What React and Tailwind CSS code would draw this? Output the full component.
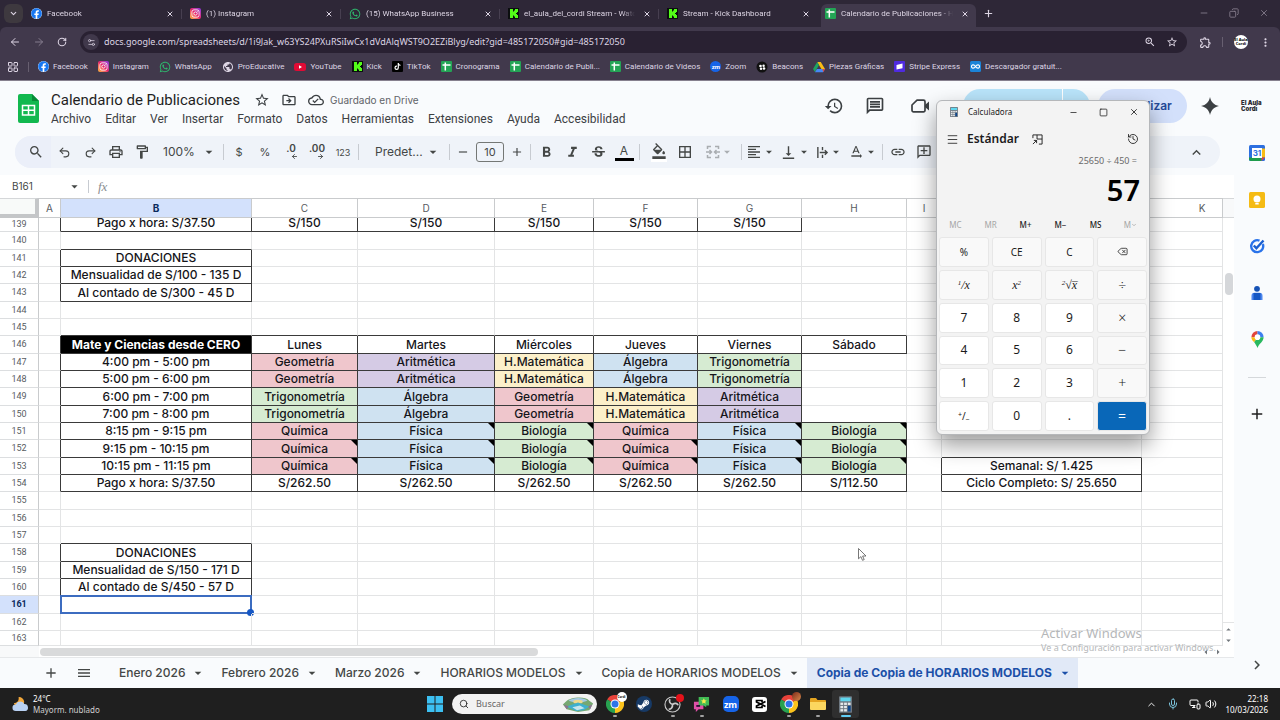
import React from "react";
import {
  MdStarOutline, MdOutlineDriveFileMove, MdOutlineCloudDone, MdSearch, MdOutlinePrint, MdOutlineFormatPaint,
  MdFormatBold, MdFormatItalic, MdStrikethroughS, MdFormatColorFill, MdBorderAll, MdFormatAlignLeft,
  MdVerticalAlignBottom, MdLink, MdOutlineAddComment, MdHistory, MdOutlineComment,
  MdKeyboardArrowUp, MdArrowDropDown, MdAdd, MdRemove, MdChevronRight, MdMenu, MdOutlineExtension,
  MdMoreVert, MdPublic, MdOutlineTextRotationNone, MdArrowDropUp, MdArrowLeft, MdArrowRight, MdZoomIn,
} from "react-icons/md";
import { FaWhatsapp, FaInstagram, FaTiktok, FaSteamSymbol, FaFacebook } from "react-icons/fa";
import {
  Undo2, Redo2, X, Plus, Minus, Square, Copy, ArrowLeft, ArrowRight, RotateCw, ChevronDown, ChevronUp,
  Menu, History, Delete, Mic, Volume2, Search, MonitorSmartphone, Settings2, LayoutGrid,
} from "lucide-react";

/* ---------- brand icons ---------- */

const FacebookIcon = () => (
  <span className="flex size-[11px] shrink-0 rounded-full bg-white"><FaFacebook className="size-[11px] text-[#1877f2]" /></span>
);
const InstagramIcon = () => (
  <span className="flex size-[11px] shrink-0 items-center justify-center rounded-[2px] bg-linear-to-tr from-[#fdb52b] via-[#e8206e] to-[#8a2be8]">
    <FaInstagram className="size-[9px] text-white" />
  </span>
);
const WhatsAppIcon = () => <FaWhatsapp className="size-[12px] shrink-0 text-[#2fb86d]" />;
const KickIcon = () => (
  <svg viewBox="0 0 11 11" className="size-[11px] shrink-0">
    <rect width="11" height="11" fill="#0b0e0f" />
    <path d="M2 1h3v2.500h1v-1h1V1h3v3H9v1H8v1h1v1h1v3H7V8.500H6v-1H5V10H2z" fill="#53fc18" />
  </svg>
);
const SheetIcon = () => (
  <svg viewBox="0 0 11 11" className="size-[11px] shrink-0">
    <rect width="11" height="11" rx="1" fill="#23a455" />
    <path d="M1.500 4h8M4.300 1.500v8" stroke="#fff" strokeWidth="1.500" />
  </svg>
);
const YouTubeIcon = () => (
  <svg viewBox="0 0 12 12" className="size-[12px] shrink-0">
    <rect y="2" width="12" height="8" rx="2.500" fill="#e00b35" />
    <path d="M5 4.300v3.400L8 6z" fill="#fff" />
  </svg>
);
const TikTokIcon = () => (
  <span className="flex size-[11px] shrink-0 items-center justify-center rounded-[1px] bg-black"><FaTiktok className="size-[7px] text-white" /></span>
);
const ZoomIcon = () => (
  <span className="flex size-[11px] shrink-0 items-center justify-center rounded-full bg-[#1664e8] text-[6px] leading-none font-bold text-white">zm</span>
);
const BeaconsIcon = () => (
  <svg viewBox="0 0 12 12" className="size-[12px] shrink-0">
    <circle cx="6" cy="6" r="5.500" fill="#111" />
    <g fill="#fff"><circle cx="4.500" cy="5" r="1.300" /><circle cx="7.600" cy="4.800" r="1.200" /><circle cx="5" cy="7.800" r="1.200" /><circle cx="8" cy="7.500" r="1.300" /></g>
  </svg>
);
const DriveIcon = () => (
  <svg viewBox="0 0 12 12" className="size-[12px] shrink-0">
    <path d="M4.200 1h3.600L12 8H8.400z" fill="#f9bc15" />
    <path d="M4.200 1 6 4.100 2 11 0 8z" fill="#1ea362" />
    <path d="M3.900 8H12l-1.900 3.200H2z" fill="#4688f4" />
    <path d="M9.600 8H12l-1.900 3.200z" fill="#e8453c" />
  </svg>
);
const StripeIcon = () => (
  <svg viewBox="0 0 11 11" className="size-[11px] shrink-0">
    <rect width="11" height="11" rx="1" fill="#4f2be0" /><path d="M2.500 4 8.500 2.600v4.600L2.500 8.500z" fill="#fff" />
  </svg>
);
const DownloaderIcon = () => (
  <svg viewBox="0 0 11 11" className="size-[11px] shrink-0">
    <rect width="11" height="11" rx="1.500" fill="#1b84d8" />
    <path d="M5.500 5.500C4.500 4 3.500 3.800 2.800 3.900c-1.800.4-1.800 2.800 0 3.200.7.100 1.700-.100 2.700-1.600s2-1.700 2.700-1.600c1.800.4 1.800 2.800 0 3.200-.7.100-1.700-.100-2.700-1.600z" fill="none" stroke="#fff" strokeWidth="1.100" />
  </svg>
);
const ChromeIcon = () => (
  <svg viewBox="0 0 20 20" className="size-[18px]">
    <path d="M10 10 1.300 5A10 10 0 0 1 18.700 5z" fill="#e8423a" />
    <path d="M10 10 18.700 5A10 10 0 0 1 10 20z" fill="#fcc31c" />
    <path d="M10 10v10A10 10 0 0 1 1.300 5z" fill="#28a150" />
    <circle cx="10" cy="10" r="5" fill="#fff" /><circle cx="10" cy="10" r="3.900" fill="#2d74e8" />
  </svg>
);
const CalcIcon = ({ className }) => (
  <svg viewBox="0 0 14 18" className={className}>
    <rect width="14" height="18" rx="1" fill="#6d7780" />
    <rect x="1.500" y="1.500" width="11" height="4" fill="#5fd6ee" />
    <g fill="#e6eaec">
      <rect x="1.500" y="7" width="3" height="2.500" /><rect x="5.500" y="7" width="3" height="2.500" /><rect x="9.500" y="7" width="3" height="2.500" />
      <rect x="1.500" y="10.500" width="3" height="2.500" /><rect x="5.500" y="10.500" width="3" height="2.500" />
      <rect x="1.500" y="14" width="3" height="2.500" /><rect x="5.500" y="14" width="3" height="2.500" />
    </g>
    <rect x="9.500" y="10.500" width="3" height="6" fill="#0d478f" />
  </svg>
);

/* ---------- browser ---------- */

const TABS = [
  ["Facebook", FacebookIcon], ["(1) Instagram", InstagramIcon], ["(15) WhatsApp Business", WhatsAppIcon],
  ["el_aula_del_cordi Stream - Watch", KickIcon], ["Stream - Kick Dashboard", KickIcon],
  ["Calendario de Publicaciones - Hojas", SheetIcon],
];

const BOOKMARKS = [
  ["Facebook", FacebookIcon], ["Instagram", InstagramIcon], ["WhatsApp", WhatsAppIcon],
  ["ProEducative", () => <MdPublic className="size-[12px] shrink-0" />], ["YouTube", YouTubeIcon], ["Kick", KickIcon],
  ["TikTok", TikTokIcon], ["Cronograma", SheetIcon], ["Calendario de Publi...", SheetIcon],
  ["Calendario de Videos", SheetIcon], ["Zoom", ZoomIcon], ["Beacons", BeaconsIcon],
  ["Piezas Gráficas", DriveIcon], ["Stripe Express", StripeIcon], ["Descargador gratuit...", DownloaderIcon],
];

function Browser() {
  return (
    <div className="bg-[#2e2737] font-['Noto_Sans',sans-serif] text-[#ddd5e4]">
      <div className="flex h-[27px] items-end">
        <button aria-label="Buscar pestañas" className="mr-[3px] mb-[4px] ml-[4px] flex size-[19px] items-center justify-center rounded-[6px] bg-[#3e393f]">
          <ChevronDown size={9} strokeWidth={3} />
        </button>
        {TABS.map(([title, Icon], i) => {
          const active = i === TABS.length - 1;
          return (
            <div key={i} className={active ? "flex h-[23px] w-[155px] items-center rounded-t-[6px] bg-[#41394c] pr-[4px] pb-[4px] pl-[4px]" : "flex h-[23px] w-[159px] items-center pr-[3px] pb-[4px] pl-[5px]"}>
              <Icon />
              <span className="ml-[5px] flex-1 overflow-hidden font-[Roboto,sans-serif] text-[8px] leading-[12px] whitespace-nowrap [mask-image:linear-gradient(to_right,black_88%,transparent)]">
                {title}
              </span>
              <button aria-label={"Cerrar " + title} className="mr-[3px] ml-[8px]"><X size={8} strokeWidth={3} /></button>
              {!active && <span className={i < 4 ? "ml-[4px] h-[10px] w-px bg-[#473f50]" : "ml-[4px] h-[10px] w-px"} />}
            </div>
          );
        })}
        <button aria-label="Nueva pestaña" className="mb-[8px] ml-[7px]"><Plus size={11} strokeWidth={2.500} /></button>
        <div className="mr-[11px] mb-[9px] ml-auto flex gap-[20px] text-[#8a8292]">
          <button aria-label="Minimizar"><Minus size={10} /></button>
          <button aria-label="Restaurar"><Copy size={10} className="-scale-x-100" /></button>
          <button aria-label="Cerrar ventana"><X size={10} /></button>
        </div>
      </div>

      <div className="rounded-t-[6px] border-b border-[#86808e] bg-[#41394c]">
        <div className="flex h-[30px] items-center">
          <button aria-label="Atrás" className="ml-[9px]"><ArrowLeft size={12} /></button>
          <button aria-label="Adelante" className="ml-[12px] text-[#857d8e]"><ArrowRight size={12} /></button>
          <button aria-label="Recargar" className="ml-[12px]"><RotateCw size={10} strokeWidth={2.500} /></button>
          <div className="ml-[13px] flex h-[22px] flex-1 items-center rounded-full bg-[#292132] pr-[9px] pl-[3px]">
            <span className="flex size-[16px] items-center justify-center rounded-full bg-[#40384b]"><Settings2 size={9} /></span>
            <input aria-label="Dirección" className="ml-[5px] min-w-0 flex-1 bg-transparent text-[9px] outline-none"
              defaultValue="docs.google.com/spreadsheets/d/1i9Jak_w63YS24PXuRSiIwCx1dVdAlqWST9O2EZiBlyg/edit?gid=485172050#gid=485172050" />
            <button aria-label="Zoom"><MdZoomIn size={12} /></button>
            <button aria-label="Favorito" className="ml-[10px]"><MdStarOutline size={12} /></button>
          </div>
          <button aria-label="Extensiones" className="ml-[12px]"><MdOutlineExtension size={13} /></button>
          <span className="ml-[10px] h-[10px] w-px bg-[#675f70]" />
          <button aria-label="Perfil" className="ml-[11px] flex size-[14px] items-center justify-center rounded-full bg-white text-[4px] leading-[4px] font-bold text-black">El Aula Cordi</button>
          <button aria-label="Menú" className="mr-[8px] ml-[11px]"><MdMoreVert size={13} /></button>
        </div>
        <nav className="flex h-[23px] items-center pl-[7px] pb-[4px]">
          <LayoutGrid size={12} />
          <span className="mx-[9px] h-[10px] w-px bg-[#675f70]" />
          <div className="flex items-center gap-[10px] font-[Roboto,sans-serif]">
            {BOOKMARKS.map(([label, Icon], i) => (
              <a key={i} href="#" className="flex items-center gap-[4px] text-[8px] leading-[12px] whitespace-nowrap"><Icon />{label}</a>
            ))}
          </div>
        </nav>
      </div>
    </div>
  );
}

/* ---------- Sheets header ---------- */

const MENUS = ["Archivo", "Editar", "Ver", "Insertar", "Formato", "Datos", "Herramientas", "Extensiones", "Ayuda", "Accesibilidad"];

function SheetsHeader() {
  return (
    <header className="flex h-[55px] items-start pt-[8px] pl-[18px] text-[#3c4043]">
      <svg viewBox="0 0 21 29" className="mt-[5px] h-[29px] w-[21px]">
        <path d="M2 0h12l7 7v20a2 2 0 0 1-2 2H2a2 2 0 0 1-2-2V2a2 2 0 0 1 2-2z" fill="#12b84f" />
        <path d="M14 0l7 7h-7z" fill="#078a38" />
        <path d="M4.500 11.500h12v9.500h-12zM4.500 16.200h12M10.500 11.500V21" fill="none" stroke="#fff" strokeWidth="1.500" />
      </svg>
      <div className="ml-[12px]">
        <div className="flex h-[22px] items-center">
          <h1 className="font-[Roboto,sans-serif] text-[15px] leading-[20px] text-[#1f1f1f]">Calendario de Publicaciones</h1>
          <button aria-label="Destacar" className="ml-[14px]"><MdStarOutline size={16} /></button>
          <button aria-label="Mover" className="ml-[11px]"><MdOutlineDriveFileMove size={16} /></button>
          <MdOutlineCloudDone size={16} className="ml-[11px]" />
          <span className="ml-[6px] text-[10px] text-[#5f6368]">Guardado en Drive</span>
        </div>
        <nav className="flex h-[16px] items-center gap-[14px] font-[Roboto,sans-serif] text-[12px] leading-[16px]">
          {MENUS.map((m) => <button key={m}>{m}</button>)}
        </nav>
      </div>
      <div className="ml-auto flex h-[34px] items-center">
        <button aria-label="Historial"><MdHistory size={20} /></button>
        <button aria-label="Comentarios" className="ml-[21px]"><MdOutlineComment size={20} className="-scale-x-100" /></button>
        <button aria-label="Videollamada" className="ml-[24px]">
          <svg viewBox="0 0 22 22" className="size-[22px]"><path d="M8 5.200h6.500a1.500 1.500 0 0 1 1.500 1.500v8.600a1.500 1.500 0 0 1-1.500 1.500h-10A1.500 1.500 0 0 1 3 15.300V10z" fill="none" stroke="currentColor" strokeWidth="1.700" strokeLinejoin="round" /><path d="M16 10l4-3.500v9L16 12z" fill="currentColor" /></svg>
        </button>
        <button aria-label="Compartir" className="ml-[32px] flex h-[34px] w-[127px] justify-end rounded-full bg-[#b9e4fa]"><span className="mr-[27px] h-full w-px bg-white" /></button>
        <button className="ml-[8px] h-[34px] w-[89px] rounded-full bg-[#d3e0fb] text-[12px] font-semibold text-[#244a98]">Actualizar</button>
        <svg viewBox="0 0 18 18" className="ml-[14px] size-[18px]"><path d="M9 0c1 5 4 8 9 9-5 1-8 4-9 9-1-5-4-8-9-9 5-1 8-4 9-9z" fill="#3c4043" /></svg>
        <span className="mr-[17px] ml-[22px] w-[22px] text-[6px] leading-[6px] font-black whitespace-nowrap text-[#2b2b33]">El Aula<br />Cordi</span>
      </div>
    </header>
  );
}

const Sep = () => <span className="mx-[2px] h-[16px] w-px shrink-0 bg-[#c7cbd1]" />;
const Tool = ({ label, children }) => (
  <button aria-label={label} className="flex h-[26px] w-[26px] shrink-0 items-center justify-center">{children}</button>
);
const DropTool = ({ label, children }) => (
  <button aria-label={label} className="flex h-[26px] w-[34px] shrink-0 items-center justify-center">{children}<MdArrowDropDown size={14} /></button>
);

function Toolbar() {
  return (
    <div className="mr-[14px] ml-[15px] flex h-[32px] items-center rounded-full bg-[#eff3f9] text-[#444746]">
      <button aria-label="Buscar" className="flex h-[32px] w-[36px] items-center justify-center rounded-l-full bg-[#ebeff9] pl-[5px]"><MdSearch size={16} /></button>
      <div className="flex items-center">
        <Tool label="Deshacer"><Undo2 size={13} /></Tool>
        <Tool label="Rehacer"><Redo2 size={13} /></Tool>
        <Tool label="Imprimir"><MdOutlinePrint size={16} /></Tool>
        <Tool label="Copiar formato"><MdOutlineFormatPaint size={16} /></Tool>
        <button className="ml-[8px] flex w-[58px] items-center justify-between text-[12px]">100%<MdArrowDropDown size={16} className="mr-[4px]" /></button>
        <Sep />
        <Tool label="Moneda"><span className="text-[11px]">$</span></Tool>
        <Tool label="Porcentaje"><span className="text-[11px]">%</span></Tool>
        <Tool label="Reducir decimales"><span className="flex flex-col text-[10px] leading-[9px] font-semibold">.0<ArrowLeft size={7} strokeWidth={3} className="ml-[7px]" /></span></Tool>
        <Tool label="Aumentar decimales"><span className="flex flex-col text-[10px] leading-[9px] font-semibold">.00<ArrowRight size={7} strokeWidth={3} className="ml-[8px]" /></span></Tool>
        <Tool label="Más formatos"><span className="text-[9px] leading-none">123</span></Tool>
        <Sep />
        <button className="ml-[14px] flex w-[72px] items-center justify-between text-[12px]">Predet...<MdArrowDropDown size={16} className="mr-[6px]" /></button>
        <Sep />
        <button aria-label="Reducir tamaño" className="ml-[4px]"><MdRemove size={14} /></button>
        <input aria-label="Tamaño de fuente" defaultValue="10" className="mx-[6px] h-[20px] w-[28px] rounded-[3px] border border-[#747775] text-center text-[11px]" />
        <button aria-label="Aumentar tamaño" className="mr-[4px]"><MdAdd size={14} /></button>
        <Sep />
        <Tool label="Negrita"><MdFormatBold size={17} /></Tool>
        <Tool label="Cursiva"><MdFormatItalic size={17} /></Tool>
        <Tool label="Tachado"><MdStrikethroughS size={17} /></Tool>
        <Tool label="Color de texto"><span className="flex w-[19px] flex-col items-center border-b-3 border-black text-[12px] leading-[14px]">A</span></Tool>
        <Sep />
        <div className="flex pl-[4px]">
          <Tool label="Color de relleno"><span className="border-b-3 border-white"><MdFormatColorFill size={16} /></span></Tool>
          <Tool label="Bordes"><MdBorderAll size={16} /></Tool>
        </div>
        <span className="pr-[2px] pl-[5px] text-[#a9adb1]">
          <DropTool label="Combinar celdas">
            <svg viewBox="0 0 14 14" className="size-[14px]" fill="none" stroke="currentColor" strokeWidth="1.500">
              <path d="M5 1.500H1.500V4M9 1.500h3.500V4M5 12.500H1.500V10M9 12.500h3.500V10M0 7h5M3.500 5 5.500 7l-2 2M14 7H9M10.500 5l-2 2 2 2" />
            </svg>
          </DropTool>
        </span>
        <Sep />
        <DropTool label="Alineación horizontal"><MdFormatAlignLeft size={16} /></DropTool>
        <DropTool label="Alineación vertical"><MdVerticalAlignBottom size={17} /></DropTool>
        <DropTool label="Ajuste de texto">
          <svg viewBox="0 0 14 14" className="size-[13px]" fill="none" stroke="currentColor" strokeWidth="1.500"><path d="M2 1v12M7 1v3.500M7 9.500V13M4 7h8M9.500 4.500 12 7 9.500 9.500" /></svg>
        </DropTool>
        <DropTool label="Rotación de texto"><MdOutlineTextRotationNone size={16} /></DropTool>
        <Sep />
        <Tool label="Insertar enlace"><MdLink size={16} /></Tool>
        <Tool label="Insertar comentario"><MdOutlineAddComment size={16} className="-scale-x-100" /></Tool>
      </div>
      <button aria-label="Ocultar menús" className="mr-[15px] ml-auto"><MdKeyboardArrowUp size={17} /></button>
    </div>
  );
}

/* ---------- grid ---------- */

const COLS = ["A", "B", "C", "D", "E", "F", "G", "H", "I", "J", "K"];
const FILL = {
  "Geometría": "bg-[#efc6cc]", "Química": "bg-[#efc6cc]", "Aritmética": "bg-[#d5cbe5]", "Álgebra": "bg-[#cfe2f1]",
  "Física": "bg-[#cfe2f1]", "H.Matemática": "bg-[#fcf0ca]", "Trigonometría": "bg-[#d6ebd2]", "Biología": "bg-[#d6ebd2]",
};
const week = (b, ...rest) => ({ B: b, C: rest[0], D: rest[1], E: rest[2], F: rest[3], G: rest[4], H: rest[5] });
const CELLS = {
  139: week("Pago x hora: S/37.50", "S/150", "S/150", "S/150", "S/150", "S/150"),
  141: { B: "DONACIONES" },
  142: { B: "Mensualidad de S/100 - 135 D" },
  143: { B: "Al contado de S/300 - 45 D" },
  146: week("Mate y Ciencias desde CERO", "Lunes", "Martes", "Miércoles", "Jueves", "Viernes", "Sábado"),
  147: week("4:00 pm - 5:00 pm", "Geometría", "Aritmética", "H.Matemática", "Álgebra", "Trigonometría"),
  148: week("5:00 pm - 6:00 pm", "Geometría", "Aritmética", "H.Matemática", "Álgebra", "Trigonometría"),
  149: week("6:00 pm - 7:00 pm", "Trigonometría", "Álgebra", "Geometría", "H.Matemática", "Aritmética"),
  150: week("7:00 pm - 8:00 pm", "Trigonometría", "Álgebra", "Geometría", "H.Matemática", "Aritmética"),
  151: week("8:15 pm - 9:15 pm", "Química", "Física", "Biología", "Química", "Física", "Biología"),
  152: week("9:15 pm - 10:15 pm", "Química", "Física", "Biología", "Química", "Física", "Biología"),
  153: { ...week("10:15 pm - 11:15 pm", "Química", "Física", "Biología", "Química", "Física", "Biología"), J: "Semanal: S/ 1.425" },
  154: { ...week("Pago x hora: S/37.50", "S/262.50", "S/262.50", "S/262.50", "S/262.50", "S/262.50", "S/112.50"), J: "Ciclo Completo: S/ 25.650" },
  158: { B: "DONACIONES" },
  159: { B: "Mensualidad de S/150 - 171 D" },
  160: { B: "Al contado de S/450 - 57 D" },
};
const NOTES = { 151: "DEGH", 152: "CDEFGH", 153: "CDEFGH" };
const ROWS = Array.from({ length: 25 }, (_, i) => 139 + i);
const at = (r, c) => (CELLS[r] && CELLS[r][c]) || "";

function rowHeight(r) {
  if (r === 139) return "h-[14px]";
  if (r === 163) return "h-[15px]";
  return (r - 140) % 3 === 0 ? "h-[18px]" : "h-[17px]";
}

function Cell({ r, c }) {
  const next = COLS[COLS.indexOf(c) + 1];
  const text = at(r, c);
  const right = text || at(r, next) ? "border-r-[#3a3a3a]" : "border-r-[#e3e4e5]";
  const bottom = text || at(r + 1, c) ? "border-b-[#3a3a3a]" : "border-b-[#e3e4e5]";
  const title = r === 146 && c === "B";
  const look = title ? "bg-black font-bold text-white" : `font-medium text-[#15151a] ${FILL[text] || ""}`;
  return (
    <td className={`relative border-r border-b p-0 text-center align-middle text-[12px] leading-[16px] whitespace-nowrap ${right} ${bottom} ${look}`}>
      {r === 139 ? <div className="flex h-[13px] items-end justify-center overflow-hidden">{text}</div> : text}
      {(NOTES[r] || "").includes(c) && (
        <svg viewBox="0 0 6 6" className="absolute top-0 right-0 size-[6px]"><path d="M0 0h6v6z" /></svg>
      )}
      {r === 161 && c === "B" && (
        <span className="absolute -top-px -right-px -bottom-px -left-px border-2 border-[#3c6cc0]">
          <span className="absolute -right-[4px] -bottom-[4px] size-[7px] rounded-full bg-[#1557c4]" />
        </span>
      )}
    </td>
  );
}

function Grid() {
  return (
    <div className="flex bg-white">
      <table className="w-full min-w-0 flex-1 table-fixed border-separate border-spacing-0 font-[Inter,sans-serif]">
        <colgroup>
          <col className="w-[39px]" /><col className="w-[22px]" /><col className="w-[191px]" /><col className="w-[106px]" />
          <col className="w-[137px]" /><col className="w-[99px]" /><col className="w-[104px]" /><col className="w-[104px]" />
          <col className="w-[105px]" /><col className="w-[35px]" /><col className="w-[200px]" /><col />
        </colgroup>
        <thead>
          <tr>
            <th aria-label="Seleccionar todo" className="h-[20px] border-t border-r-4 border-b-4 border-t-[#d5d7d9] border-r-[#c4c6c8] border-b-[#c4c6c8] bg-[#f8faf9] p-0" />
            {COLS.map((c) => (
              <th key={c} className={`h-[20px] border-t border-r border-b border-[#c9cbcd] py-0 pr-0 text-[10px] leading-[12px] ${c === "K" ? "pl-[40px]" : "pl-0"} ${c === "B" ? "bg-[#d3e1fc] font-bold text-[#0b2a5c]" : "font-normal text-[#575b5f]"}`}>{c}</th>
            ))}
          </tr>
        </thead>
        <tbody>
          {ROWS.map((r) => (
            <tr key={r} className={rowHeight(r)}>
              <th className={`border-r border-b border-r-[#c9cbcd] border-b-[#dcdee0] p-0 text-center font-[Roboto,sans-serif] text-[9px] leading-[11px] ${r === 161 ? "bg-[#d3e1fc] font-bold text-[#0b2a5c]" : "font-normal text-[#575b5f]"}`}>{r}</th>
              {COLS.map((c) => <Cell key={c} r={r} c={c} />)}
            </tr>
          ))}
        </tbody>
      </table>
      <div className="flex w-[11px] shrink-0 flex-col items-center text-[#70757a]">
        <div className="h-[20px] w-full border-t border-b border-[#d5d7d9] bg-[#f8f9fa]" />
        <div className="mt-[55px] h-[22px] w-[8px] rounded-full bg-[#d5d7da]" />
        <div className="mt-auto flex flex-col border-t border-[#e3e4e5] pt-[1px]"><MdArrowDropUp size={11} /><MdArrowDropDown size={11} /></div>
      </div>
    </div>
  );
}

const SHEETS = ["Enero 2026", "Febrero 2026", "Marzo 2026", "HORARIOS MODELOS", "Copia de HORARIOS MODELOS", "Copia de Copia de HORARIOS MODELOS"];

function SheetTabs() {
  return (
    <>
      <div className="flex h-[11px] items-center bg-white">
        <div className="h-full w-[39px] bg-[#f8f9fa]" />
        <div className="mx-px h-[8px] w-[498px] rounded-full bg-[#d9dadb]" />
        <div className="mr-[10px] ml-auto flex text-[#70757a]"><MdArrowLeft size={12} /><MdArrowRight size={12} /></div>
      </div>
      <div className="flex h-[31px] items-center border-t border-[#e6e8ea] text-[#444746]">
        <button aria-label="Agregar hoja" className="ml-[43px]"><MdAdd size={16} /></button>
        <button aria-label="Todas las hojas" className="mr-[17px] ml-[17px]"><MdMenu size={16} /></button>
        {SHEETS.map((s, i) => (
          <button key={s} className={`flex h-full items-center gap-[5px] pr-[5px] pl-[10px] text-[12px] whitespace-nowrap ${i === 5 ? "bg-[#e1e9f7] font-bold text-[#1c50a8]" : "font-medium"}`}>
            {s}<MdArrowDropDown size={16} />
          </button>
        ))}
      </div>
    </>
  );
}

function SidePanel() {
  return (
    <aside className="flex w-[46px] shrink-0 flex-col items-center pt-[9px]">
      <a href="#" aria-label="Calendar"><svg viewBox="0 0 16 16" className="size-[16px]">
        <rect width="16" height="16" rx="1.500" fill="#2d6fe0" /><path d="M12.500 3.500H16v9h-3.500z" fill="#f9bc15" /><path d="M3.500 12.500h9V16H2a2 2 0 0 1-2-2v-1.500z" fill="#1f9c4b" /><path d="M12.500 12.500H16L12.500 16z" fill="#e2453c" />
        <rect x="3" y="3" width="10" height="10" fill="#fff" /><text x="8" y="11" textAnchor="middle" fontSize="8" fontWeight="700" fill="#2d6fe0" fontFamily="Inter, sans-serif">31</text>
      </svg></a>
      <a href="#" aria-label="Keep" className="mt-[31px]"><svg viewBox="0 0 16 16" className="size-[16px]">
        <rect width="16" height="16" rx="1.500" fill="#f5bb14" /><circle cx="8" cy="7" r="3.500" fill="#fff" /><rect x="6.300" y="11" width="3.400" height="1.500" fill="#fff" />
      </svg></a>
      <a href="#" aria-label="Tasks" className="mt-[30px]"><svg viewBox="0 0 16 16" className="size-[16px]" fill="none">
        <path d="M13.800 6A6 6 0 1 1 10.500 2.600" stroke="#2a73ea" strokeWidth="2.400" /><path d="m4.800 7.500 2.600 2.700L14.500 2.500" stroke="#1b5fd0" strokeWidth="2.400" />
      </svg></a>
      <a href="#" aria-label="Contactos" className="mt-[31px]"><svg viewBox="0 0 16 16" className="size-[16px]">
        <circle cx="8" cy="3.800" r="2.900" fill="#1652b5" /><path d="M2.500 15v-4.200A3 3 0 0 1 5.500 7.800h5a3 3 0 0 1 3 3V15z" fill="#4d86ee" /><path d="M4.500 8h7v7h-7z" fill="#1557c4" />
      </svg></a>
      <a href="#" aria-label="Maps" className="mt-[30px]"><svg viewBox="0 0 16 18" className="h-[17px] w-[15px]">
        <path d="M8 0a6.500 6.500 0 0 0-6.500 6.500L8 6.500z" fill="#e2453c" /><path d="M8 0a6.500 6.500 0 0 1 6.500 6.500H8z" fill="#3d7ff0" />
        <path d="M1.500 6.500C1.500 9 3 10.500 4.500 12L8 6.500z" fill="#f9bc15" /><path d="M14.500 6.500c0 5-5 6.500-6.500 11.500-1-2.500-2.200-4-3.500-6L8 6.500z" fill="#29b85f" /><circle cx="8" cy="6.500" r="3" fill="#fff" />
      </svg></a>
      <span className="mt-[29px] h-px w-[18px] bg-[#d5d8db]" />
      <button aria-label="Complementos" className="mt-[27px] text-[#1f1f1f]"><MdAdd size={18} /></button>
      <button aria-label="Ocultar panel" className="mt-auto mb-[14px] text-[#444746]"><MdChevronRight size={18} /></button>
    </aside>
  );
}

/* ---------- calculator ---------- */

const V = ({ children }) => <i className="font-['Liberation_Serif',serif] text-[12px] font-normal">{children}</i>;
const KEYS = [
  ["%", "%"], ["CE", "CE"], ["C", "C"], ["retroceso", <Delete size={11} strokeWidth={1.700} />],
  ["recíproco", <V><sup className="text-[7px]">1</sup>/x</V>], ["cuadrado", <V>x<sup className="text-[7px]">2</sup></V>],
  ["raíz", <V><sup className="text-[7px]">2</sup>√x̅</V>], ["dividir", "÷"],
  ["7", "7"], ["8", "8"], ["9", "9"], ["multiplicar", "×"],
  ["4", "4"], ["5", "5"], ["6", "6"], ["restar", "−"],
  ["1", "1"], ["2", "2"], ["3", "3"], ["sumar", "+"],
  ["signo", <span className="text-[10px]"><sup className="text-[7px]">+</sup>/<sub className="text-[7px]">−</sub></span>], ["0", "0"], ["punto", "."], ["igual", "="],
];

function Calculator() {
  return (
    <section aria-label="Calculadora" className="absolute top-[100px] right-[130px] w-[214px] rounded-[6px] border border-[#b5b7ba] bg-[#f3f3f3] pb-[3px] font-['Noto_Sans',sans-serif] text-[#1b1b1b] shadow-[0_10px_22px_rgba(0,0,0,0.4)]">
      <div className="flex h-[22px] items-center pl-[13px]">
        <CalcIcon className="h-[10px] w-[8px]" />
        <span className="ml-[10px] text-[8px]">Calculadora</span>
        <div className="mr-[10px] ml-auto flex gap-[21px]">
          <button aria-label="Minimizar calculadora"><Minus size={9} /></button>
          <button aria-label="Maximizar calculadora"><Square size={9} /></button>
          <button aria-label="Cerrar calculadora"><X size={10} /></button>
        </div>
      </div>
      <div className="flex h-[32px] items-center pr-[10px] pl-[9px]">
        <button aria-label="Navegación"><Menu size={13} strokeWidth={1.500} /></button>
        <h2 className="ml-[8px] text-[12px] font-semibold">Estándar</h2>
        <button aria-label="Mantener visible" className="ml-[13px]">
          <svg viewBox="0 0 12 12" className="size-[11px]" fill="none" stroke="currentColor" strokeWidth="1"><path d="M1 4.500V1h10v10H7.500M5.500 1v4.500H11M1 11l4-4M2 7h3v3" /></svg>
        </button>
        <button aria-label="Historial de cálculos" className="ml-auto"><History size={12} strokeWidth={1.700} /></button>
      </div>
      <p className="pr-[12px] text-right text-[9px] leading-[12px] text-[#6a6a6a]">25650 ÷ 450 =</p>
      <p className="pr-[9px] text-right text-[29px] leading-[46px] font-semibold text-black">57</p>
      <div className="grid h-[24px] grid-cols-6 items-center px-[1px] text-center text-[8px]">
        {["MC", "MR", "M+", "M−", "MS"].map((k, i) => <button key={k} className={i < 2 ? "text-[#a5a5a5]" : "font-medium"}>{k}</button>)}
        <button aria-label="Memoria" className="flex items-center justify-center text-[#a5a5a5]">M<ChevronDown size={6} strokeWidth={3} /></button>
      </div>
      <div className="grid h-[194px] grid-cols-4 grid-rows-6 gap-[3px] px-[2px]">
        {KEYS.map(([label, face], i) => {
          const digit = i >= 8 && i % 4 !== 3;
          const look = label === "igual" ? "bg-[#0967b8] text-white text-[14px]" : digit ? "bg-white text-[12px]" : i < 4 ? "bg-[#f9f9f9] text-[10px]" : "bg-[#f9f9f9] text-[14px] font-light";
          return <button key={i} aria-label={label} className={`flex items-center justify-center rounded-[3px] border border-[#e7e7e7] leading-none ${look}`}>{face}</button>;
        })}
      </div>
    </section>
  );
}

/* ---------- taskbar ---------- */

const APPS = [
  ["Chrome", <><ChromeIcon /><span className="absolute -top-[3px] -right-[3px] size-[10px] rounded-full bg-white text-center text-[3px] leading-[10px] font-bold text-black">Cordi</span></>, true],
  ["Steam", <span className="flex size-[16px] items-center justify-center rounded-full bg-[#173a66]"><FaSteamSymbol size={13} className="text-white" /></span>, false],
  ["OBS", <><svg viewBox="0 0 18 18" className="size-[17px]"><circle cx="9" cy="9" r="8" fill="#222" stroke="#c9c9c9" strokeWidth="1.200" /><path d="M9 9C6 8 5 5.500 6.500 3.500M9 9c2.500-2 5-1.500 6 .8M9 9c.3 3-1.500 5-4 5" fill="none" stroke="#c9c9c9" strokeWidth="1.800" /></svg><span className="absolute -top-[2px] -right-[3px] size-[8px] rounded-full bg-[#e5121a]" /></>, true],
  ["Chat", <svg viewBox="0 0 18 18" className="size-[17px]"><path d="M1 6h10v8H6l-3 3v-3H1z" fill="#e050a8" /><path d="M6 1h11v9h-3v2l-3-2H6z" fill="#41bb55" /><path d="m11.500 2.500 1 2 2 .2-1.500 1.400.4 2-1.900-1-1.900 1 .4-2L8.500 4.700l2-.2z" fill="#f7e94c" /><path d="M3.500 9.500h4v2h-4z" fill="#2b1033" /></svg>, true],
  ["Zoom", <span className="flex size-[16px] items-center justify-center rounded-[5px] bg-[#1664e8] text-[9px] leading-none font-bold text-white">zm</span>, false],
  ["CapCut", <span className="flex size-[15px] items-center justify-center rounded-[3px] bg-white"><svg viewBox="0 0 12 10" className="w-[12px]" fill="none" stroke="#000" strokeWidth="1.700"><path d="M8 3V1.500H2.500V3L11.500 7.500M8 7v1.500H2.500V7L11.500 2.500" /></svg></span>, false],
  ["Chrome 2", <><ChromeIcon /><span className="absolute -top-[3px] -right-[3px] size-[9px] rounded-full bg-linear-to-br from-[#7d2a1a] to-[#d98a4c]" /></>, true],
  ["Archivos", <svg viewBox="0 0 16 14" className="h-[14px] w-[16px]"><path d="M0 2a1 1 0 0 1 1-1h5l1.500 2H15a1 1 0 0 1 1 1v8H0z" fill="#e5a521" /><path d="M0 5h16v7a1 1 0 0 1-1 1H1a1 1 0 0 1-1-1z" fill="#fbd75f" /></svg>, true],
];

function Taskbar() {
  return (
    <footer className="grid h-[32px] grid-cols-[1fr_auto_1fr] items-center bg-[#1f1f1f] font-['Noto_Sans',sans-serif] text-white">
      <div className="flex items-center pl-[12px] text-[8px] leading-[11px]">
        <svg viewBox="0 0 18 18" className="mr-[4px] size-[17px]">
          <path d="M7 1c.5 4-1 6-5 6.500A5.500 5.500 0 1 0 7 1z" fill="#f3a83b" />
          <path d="M4 16a3.500 3.500 0 0 1 0-7 5 5 0 0 1 9-.5A3.800 3.800 0 0 1 14 16z" fill="#b9d1f3" />
        </svg>
        <div><div>24°C</div><div className="text-[#cfcfcf]">Mayorm. nublado</div></div>
      </div>
      <div className="flex items-center">
        <button aria-label="Inicio" className="mr-[9px] ml-[6px]">
          <svg viewBox="0 0 16 16" className="size-[16px]" fill="#3cc0f2"><path d="M0 0h7.500v7.500H0zM8.500 0H16v7.500H8.500zM0 8.500h7.500V16H0zM8.500 8.500H16V16H8.500z" /></svg>
        </button>
        <label className="mr-[3px] flex h-[20px] w-[145px] items-center rounded-full bg-[#f2f2f2] pr-[3px] pl-[7px] text-[#222]">
          <Search size={10} />
          <input aria-label="Buscar" placeholder="Buscar" className="ml-[7px] w-[60px] min-w-0 flex-1 bg-transparent text-[9px] outline-none placeholder:text-[#666]" />
          <svg viewBox="0 0 32 18" className="h-[17px] w-[32px]">
            <path d="M3 6C8 1 24 0 28 5l4 3-4 7-12 2-12-3-4-5z" fill="#76a872" /><path d="M6 5c5-4 16-4 20 0l-10 3z" fill="#a4c9e6" /><ellipse cx="16" cy="6" rx="5" ry="2" fill="#f0d98c" /><path d="m4 11 12-4 12 4-6 4-8 1z" fill="#3fb0cf" /><path d="m10 12 8-2 5 3-8 2z" fill="#c8e6ee" /><path d="m1 9 5 2-2 3zM27 11l4-2-2 5z" fill="#8d6f94" />
          </svg>
        </label>
        {APPS.map(([name, icon, running]) => (
          <button key={name} aria-label={name} className="relative flex h-[32px] w-[29px] items-center justify-center">
            <span className="relative">{icon}</span>
            {running && <span className="absolute bottom-[3px] h-[2px] w-[4px] rounded-full bg-[#a2a2a2]" />}
          </button>
        ))}
        <button aria-label="Abrir calculadora" className="relative flex h-[28px] w-[27px] items-center justify-center rounded-[3px] bg-[#2f2f2f]">
          <CalcIcon className="h-[17px] w-[13px]" />
          <span className="absolute bottom-px h-[2px] w-[10px] rounded-full bg-[#60cdf5]" />
        </button>
      </div>
      <div className="flex items-center justify-end pr-[12px]">
        <ChevronUp size={11} />
        <Mic size={12} className="ml-[10px] text-[#7cc3dc]" />
        <MonitorSmartphone size={12} className="ml-[10px]" />
        <Volume2 size={12} className="ml-[4px]" />
        <div className="ml-[8px] text-right text-[8px] leading-[11px]"><div>22:18</div><div>10/03/2026</div></div>
      </div>
    </footer>
  );
}

export default function App() {
  return (
    <div className="relative flex min-h-screen flex-col bg-[#f9fbfd] font-[Inter,sans-serif]">
      <Browser />
      <SheetsHeader />
      <div className="flex flex-1">
        <main className="flex min-w-0 flex-1 flex-col">
          <Toolbar />
          <div className="mt-[7px] flex h-[23px] items-center bg-white text-[#444746]">
            <input aria-label="Cuadro de nombres" defaultValue="B161" className="ml-[12px] w-[55px] text-[10px] outline-none" />
            <MdArrowDropDown size={15} />
            <span className="mx-[6px] h-[13px] w-px bg-[#c7cbd1]" />
            <label htmlFor="formula" className="ml-[3px] font-['Liberation_Serif',serif] text-[13px] text-[#8a8d91] italic">fx</label>
            <input id="formula" className="ml-[8px] min-w-0 flex-1 text-[11px] outline-none" />
          </div>
          <Grid />
          <SheetTabs />
        </main>
        <SidePanel />
      </div>
      <Taskbar />
      <Calculator />
      <div className="pointer-events-none absolute right-[55px] bottom-[65px] w-[184px] font-['Noto_Sans',sans-serif] whitespace-nowrap text-[#b5b7b9]">
        <div className="text-[13px] leading-[16px]">Activar Windows</div>
        <div className="text-[9px] leading-[14px]">Ve a Configuración para activar Windows.</div>
      </div>
      <svg viewBox="0 0 9 13" className="pointer-events-none absolute top-[548px] left-[858px] h-[13px] w-[9px]"><path d="M.5.5v10.300l2.400-2.200 1.600 3.700 1.700-.7-1.600-3.600H8z" fill="#fff" stroke="#555" strokeWidth=".8" /></svg>
    </div>
  );
}
